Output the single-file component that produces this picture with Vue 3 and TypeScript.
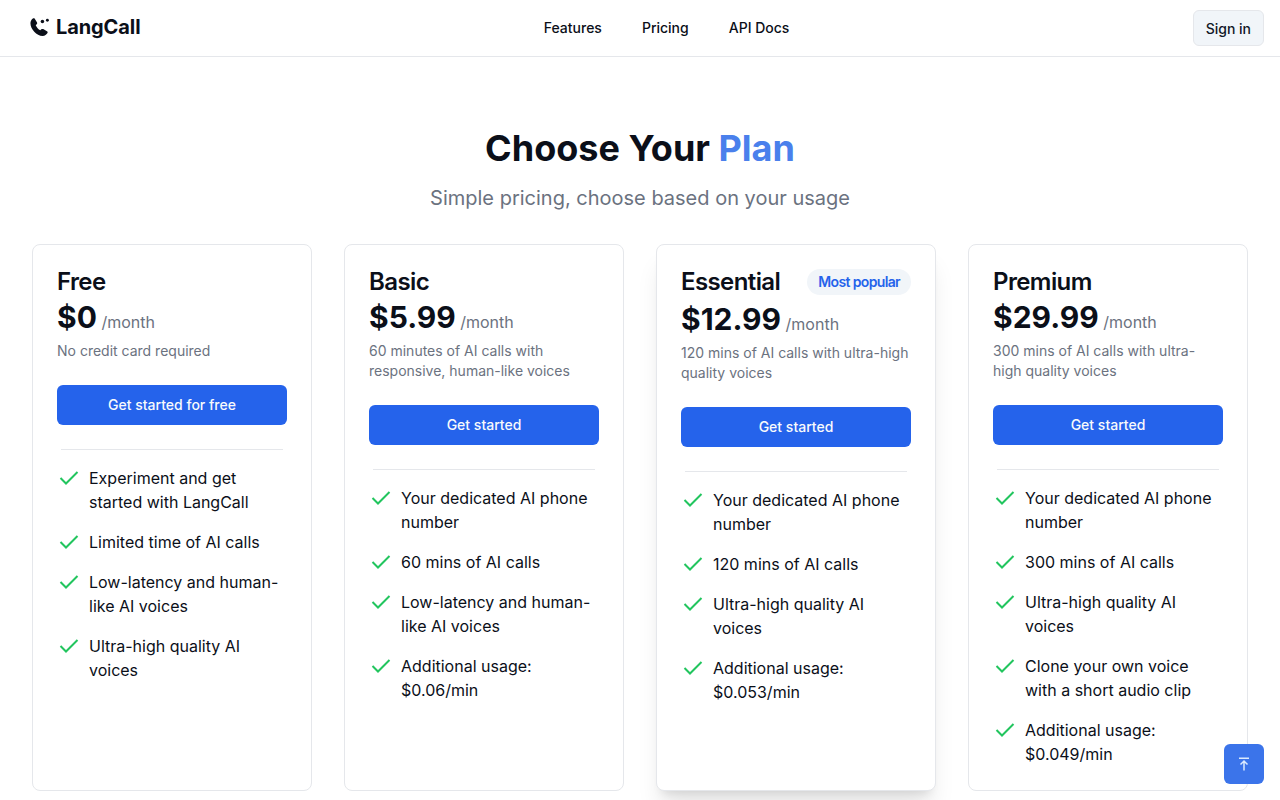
<template>
  <div class="page">
    <header class="topbar">
      <a class="logo">
        <svg class="logo-icon" viewBox="0 0 20 20" width="22" height="22">
          <path d="M4.200 2.300l2.200 3.600c.3.6.2 1.200-.3 1.600l-.9.800c.9 2 2.300 3.600 4.200 4.700l.9-.9c.5-.4 1.100-.5 1.700-.2l3.400 2c.6.3.8 1 .5 1.600-.8 1.400-2.400 2.600-4.400 2.600C6 18.100.4 11.800.4 6.500c0-1.800 1-3.500 2.200-4.300.5-.3 1.200-.2 1.600.1z" fill="#0b0f19" />
          <circle cx="11.300" cy="5" r="1.600" fill="#0b0f19" />
          <circle cx="15.800" cy="3.900" r="1.300" fill="#0b0f19" />
        </svg>
        <span>LangCall</span>
      </a>
      <nav class="nav">
        <a v-for="link in links" :key="link">{{ link }}</a>
      </nav>
      <button class="signin">Sign in</button>
    </header>

    <main class="pricing">
      <h1>Choose Your <span>Plan</span></h1>
      <p class="sub">Simple pricing, choose based on your usage</p>

      <div class="plans">
        <section v-for="plan in plans" :key="plan.name" class="card" :class="{ featured: plan.popular }">
          <div class="card-head">
            <h2>{{ plan.name }}</h2>
            <span v-if="plan.popular" class="badge">Most popular</span>
          </div>
          <div class="price"><strong>{{ plan.price }}</strong> <span>/month</span></div>
          <p class="desc">{{ plan.desc }}</p>
          <button class="cta">{{ plan.cta }}</button>
          <hr />
          <ul>
            <li v-for="item in plan.features" :key="item">
              <svg viewBox="0 0 20 20" width="20" height="20">
                <path d="M1.500 10 7 15.500 18.500 4" fill="none" stroke="#22c55e" stroke-width="2" />
              </svg>
              <span>{{ item }}</span>
            </li>
          </ul>
        </section>
      </div>
    </main>

    <button class="to-top" aria-label="Back to top">
      <svg viewBox="0 0 16 16" width="16" height="16">
        <path d="M3 2.200h10M8 14.500V5M4.500 8.500 8 5 11.500 8.500" fill="none" stroke="#dbeafe" stroke-width="1.500" />
      </svg>
    </button>
  </div>
</template>

<script setup lang="ts">
interface Plan {
  name: string
  price: string
  desc: string
  cta: string
  popular?: boolean
  features: string[]
}

const links = ['Features', 'Pricing', 'API Docs']

const plans: Plan[] = [
  {
    name: 'Free',
    price: '$0',
    desc: 'No credit card required',
    cta: 'Get started for free',
    features: [
      'Experiment and get started with LangCall',
      'Limited time of AI calls',
      'Low-latency and human-like AI voices',
      'Ultra-high quality AI voices',
    ],
  },
  {
    name: 'Basic',
    price: '$5.99',
    desc: '60 minutes of AI calls with responsive, human-like voices',
    cta: 'Get started',
    features: [
      'Your dedicated AI phone number',
      '60 mins of AI calls',
      'Low-latency and human-like AI voices',
      'Additional usage: $0.06/min',
    ],
  },
  {
    name: 'Essential',
    price: '$12.99',
    desc: '120 mins of AI calls with ultra-high quality voices',
    cta: 'Get started',
    popular: true,
    features: [
      'Your dedicated AI phone number',
      '120 mins of AI calls',
      'Ultra-high quality AI voices',
      'Additional usage: $0.053/min',
    ],
  },
  {
    name: 'Premium',
    price: '$29.99',
    desc: '300 mins of AI calls with ultra-high quality voices',
    cta: 'Get started',
    features: [
      'Your dedicated AI phone number',
      '300 mins of AI calls',
      'Ultra-high quality AI voices',
      'Clone your own voice with a short audio clip',
      'Additional usage: $0.049/min',
    ],
  },
]
</script>

<style>
html,
body {
  margin: 0;
  height: 800px;
  overflow: hidden;
  background: #fff;
}
</style>

<style scoped>
.page {
  font-family: Inter, "Liberation Sans", sans-serif;
  color: #0b0f19;
}

.topbar {
  height: 56px;
  border-bottom: 1px solid #e5e7eb;
  display: flex;
  justify-content: space-between;
  align-items: center;
  padding: 0 16px 0 30px;
}

.logo {
  display: flex;
  align-items: center;
  gap: 4px;
  font-size: 20px;
  font-weight: 700;
  letter-spacing: -0.1px;
  padding-bottom: 3px;
}

.nav {
  display: flex;
  gap: 40px;
  font-size: 14px;
  font-weight: 500;
  padding-bottom: 2px;
}

.signin {
  height: 36px;
  padding: 0 12px;
  font: 500 14px Inter, sans-serif;
  color: #111827;
  background: #f1f5f9;
  border: 1px solid #e5e7eb;
  border-radius: 6px;
}

.pricing {
  padding: 67px 32px 0;
}

h1 {
  margin: 0;
  text-align: center;
  font-size: 36px;
  line-height: 48px;
  font-weight: 700;
}

h1 span {
  color: #4a80ec;
}

.sub {
  margin: 12px 0 0;
  text-align: center;
  font-size: 20px;
  line-height: 28px;
  color: #6b7280;
}

.plans {
  margin-top: 32px;
  display: grid;
  grid-template-columns: repeat(4, 280px);
  gap: 32px;
}

.card {
  height: 547px;
  box-sizing: border-box;
  padding: 24px;
  border: 1px solid #e5e7eb;
  border-radius: 8px;
  background: #fff;
}

.featured {
  box-shadow: 0 20px 25px -5px rgba(0, 0, 0, 0.1), 0 8px 10px -6px rgba(0, 0, 0, 0.1);
}

.card-head {
  display: flex;
  align-items: flex-start;
  justify-content: space-between;
}

h2 {
  margin: 0;
  font-size: 24px;
  line-height: 26px;
  font-weight: 600;
  letter-spacing: -0.6px;
}

.badge {
  padding: 0 11px;
  height: 26px;
  margin-bottom: 2px;
  line-height: 26px;
  border-radius: 13px;
  background: #f1f5f9;
  color: #2563eb;
  font-size: 14px;
  font-weight: 600;
  letter-spacing: -0.65px;
}

.price {
  margin-top: 4px;
  line-height: 36px;
  height: 36px;
}

.price strong {
  font-size: 30px;
  font-weight: 700;
}

.price span {
  font-size: 16px;
  color: #6b7280;
}

.desc {
  margin: 6px 0 0;
  font-size: 14px;
  line-height: 20px;
  color: #6b7280;
}

.cta {
  display: block;
  width: 100%;
  height: 40px;
  margin-top: 24px;
  padding: 0 0 1px;
  border: 0;
  border-radius: 6px;
  background: #2563eb;
  color: #f8fafc;
  font: 500 14px Inter, sans-serif;
}

hr {
  margin: 24px 4px 16px;
  border: 0;
  border-top: 1px solid #e5e7eb;
}

ul {
  list-style: none;
  margin: 0;
  padding: 0;
  display: flex;
  flex-direction: column;
  gap: 16px;
}

li {
  display: flex;
  gap: 10px;
  font-size: 16px;
  line-height: 24px;
  padding-left: 2px;
}

li svg {
  flex: none;
  margin-top: 2px;
}

.to-top {
  position: fixed;
  right: 16px;
  bottom: 16px;
  width: 40px;
  height: 40px;
  padding: 0;
  border: 0;
  border-radius: 6px;
  background: #3b74ea;
  display: flex;
  align-items: center;
  justify-content: center;
}
</style>
